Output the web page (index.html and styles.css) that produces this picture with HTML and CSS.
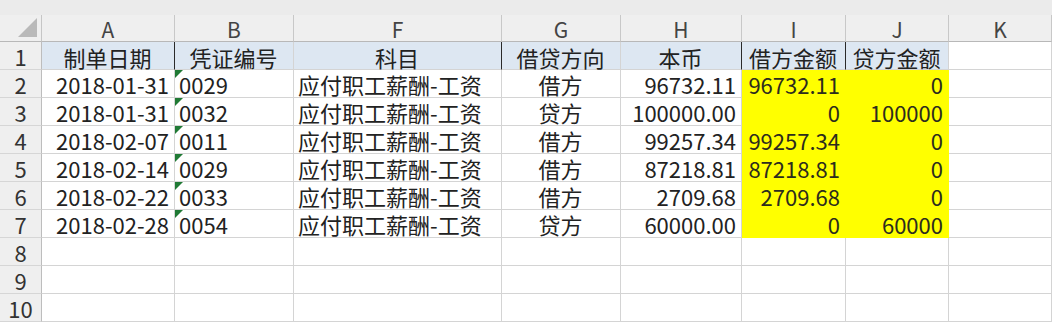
FILE: index.html
```html
<!DOCTYPE html>
<html lang="zh-CN">
<head>
<meta charset="utf-8">
<title>Sheet</title>
<link rel="stylesheet" href="styles.css">
</head>
<body>
<div class="topband"></div>
<div class="sheet">
  <div class="corner"><span class="corner-tri"></span></div>
  <div class="ch">A</div><div class="ch">B</div><div class="ch">F</div><div class="ch">G</div><div class="ch">H</div><div class="ch">I</div><div class="ch">J</div><div class="ch">K</div>

  <div class="rh">1</div>
  <div class="c hd dk">制单日期</div><div class="c hd">凭证编号</div><div class="c hd dk">科目</div><div class="c hd">借贷方向</div><div class="c hd dk">本币</div><div class="c hd dk">借方金额</div><div class="c hd">贷方金额</div><div class="c"></div>

  <div class="rh">2</div>
  <div class="c r">2018-01-31</div><div class="c l tag">0029</div><div class="c l">应付职工薪酬-工资</div><div class="c m">借方</div><div class="c r">96732.11</div><div class="c r y">96732.11</div><div class="c r y">0</div><div class="c"></div>

  <div class="rh">3</div>
  <div class="c r">2018-01-31</div><div class="c l tag">0032</div><div class="c l">应付职工薪酬-工资</div><div class="c m">贷方</div><div class="c r">100000.00</div><div class="c r y">0</div><div class="c r y">100000</div><div class="c"></div>

  <div class="rh">4</div>
  <div class="c r">2018-02-07</div><div class="c l tag">0011</div><div class="c l">应付职工薪酬-工资</div><div class="c m">借方</div><div class="c r">99257.34</div><div class="c r y">99257.34</div><div class="c r y">0</div><div class="c"></div>

  <div class="rh">5</div>
  <div class="c r">2018-02-14</div><div class="c l tag">0029</div><div class="c l">应付职工薪酬-工资</div><div class="c m">借方</div><div class="c r">87218.81</div><div class="c r y">87218.81</div><div class="c r y">0</div><div class="c"></div>

  <div class="rh">6</div>
  <div class="c r">2018-02-22</div><div class="c l tag">0033</div><div class="c l">应付职工薪酬-工资</div><div class="c m">借方</div><div class="c r">2709.68</div><div class="c r y">2709.68</div><div class="c r y">0</div><div class="c"></div>

  <div class="rh">7</div>
  <div class="c r">2018-02-28</div><div class="c l tag">0054</div><div class="c l">应付职工薪酬-工资</div><div class="c m">贷方</div><div class="c r">60000.00</div><div class="c r y">0</div><div class="c r y">60000</div><div class="c"></div>

  <div class="rh">8</div>
  <div class="c"></div><div class="c"></div><div class="c"></div><div class="c"></div><div class="c"></div><div class="c"></div><div class="c"></div><div class="c"></div>

  <div class="rh">9</div>
  <div class="c"></div><div class="c"></div><div class="c"></div><div class="c"></div><div class="c"></div><div class="c"></div><div class="c"></div><div class="c"></div>

  <div class="rh">10</div>
  <div class="c"></div><div class="c"></div><div class="c"></div><div class="c"></div><div class="c"></div><div class="c"></div><div class="c"></div><div class="c"></div>
</div>
</body>
</html>
```

FILE: styles.css
```css
html, body {
  margin: 0;
  padding: 0;
  background: #ffffff;
}
body {
  width: 1052px;
  height: 323px;
  overflow: hidden;
  font-family: "Noto Sans CJK SC", "Noto Sans", sans-serif;
  color: #222222;
}
.topband {
  height: 15px;
  background: #ebebeb;
}
.sheet {
  display: grid;
  grid-template-columns: 42px 133px 119px 208px 119px 121px 104px 103px 103px;
  grid-template-rows: 27px;
  grid-auto-rows: 28px;
}
.sheet > div {
  box-sizing: border-box;
  display: flex;
  align-items: center;
  font-size: 22px;
  line-height: 1;
  white-space: nowrap;
}
.corner {
  background: #efefef;
  border-right: 1px solid #c6c6c6;
  border-bottom: 1px solid #b8b8b8;
  justify-content: flex-end;
  align-items: flex-end !important;
  padding: 0 4px 4px 0;
}
.corner-tri {
  display: block;
  width: 0;
  height: 0;
  border-left: 19px solid transparent;
  border-bottom: 19px solid #b9b9b9;
}
.ch {
  background: #efefef;
  border-right: 1px solid #c8c8c8;
  border-bottom: 1px solid #b8b8b8;
  justify-content: center;
  color: #444444;
  font-size: 21px !important;
  padding-top: 2px;
}
.rh {
  background: #efefef;
  border-right: 1px solid #bdbdbd;
  border-bottom: 1px solid #d6d6d6;
  justify-content: center;
  color: #333333;
  padding-top: 1px;
}
.c {
  position: relative;
  border-right: 1px solid #d4d4d4;
  border-bottom: 1px solid #d4d4d4;
  padding: 1px 5px 0 4px;
}
.hd {
  background: #dde7f2;
  justify-content: center;
  color: #222222;
  padding-top: 3px;
}
.hd.dk {
  border-right-color: #2a2a2a;
}
.r { justify-content: flex-end; }
.l { justify-content: flex-start; }
.m { justify-content: center; }
.y {
  background: #ffff00;
  border-right-color: #ffff00;
  border-bottom-color: #ffff00;
  color: #2c2c1e;
}
.tag::before {
  content: "";
  position: absolute;
  left: 0;
  top: 0;
  width: 0;
  height: 0;
  border-top: 8px solid #207a35;
  border-right: 8px solid transparent;
}
```
